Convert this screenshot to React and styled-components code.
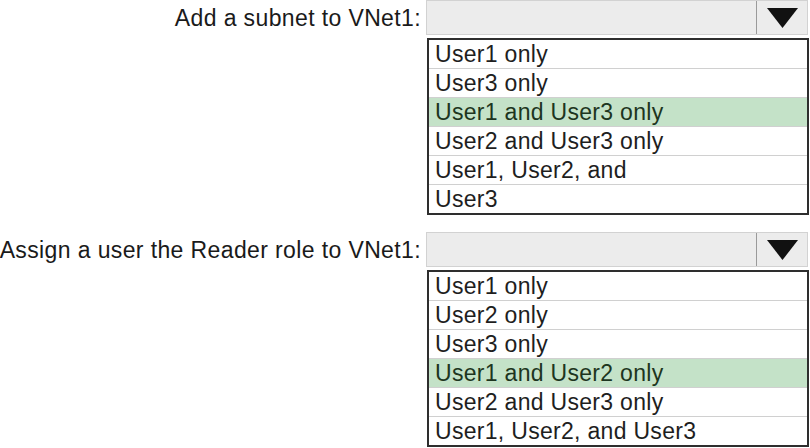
import React from "react";
import styled, { createGlobalStyle } from "styled-components";

const Global = createGlobalStyle`
  html, body { margin: 0; padding: 0; background: #ffffff; }
  body { font-family: "Liberation Sans", Arial, sans-serif; color: #222; }
`;

const Page = styled.div`
  width: 810px;
  height: 448px;
  overflow: hidden;
  display: flex;
  flex-direction: column;
  gap: 17px;
`;

const Block = styled.div`
  display: grid;
  grid-template-columns: 426px 383px;
  grid-template-rows: 35px auto;
  row-gap: 3px;
`;

const Label = styled.div`
  grid-column: 1;
  grid-row: 1;
  justify-self: end;
  align-self: center;
  padding-right: 5px;
  font-size: 23px;
  letter-spacing: 0.38px;
  line-height: 26px;
  color: #1a1a1a;
  white-space: nowrap;
  padding-top: 1px;
`;

const Header = styled.div`
  grid-column: 2;
  grid-row: 1;
  display: flex;
  background: #ececec;
  border: 1px solid #d2d2d2;
  box-sizing: border-box;
  width: 382px;
`;

const Field = styled.div`
  flex: 1;
`;

const ArrowButton = styled.div`
  width: 50px;
  border-left: 1px solid #9a9a9a;
  display: flex;
  align-items: center;
  justify-content: center;
`;

const List = styled.div`
  grid-column: 2;
  grid-row: 2;
  margin-left: 1px;
  border: 2px solid #2e2e2e;
  box-sizing: border-box;
  width: 382px;
  display: flex;
  flex-direction: column;
`;

const Option = styled.div`
  height: 28px;
  line-height: 28px;
  padding-left: 6px;
  font-size: 23px;
  letter-spacing: 0.3px;
  color: ${(p) => (p.$selected ? "#1d3520" : "#1e1e1e")};
  background: ${(p) => (p.$selected ? "#c4e2c8" : "#ffffff")};
  border-top: ${(p) => (p.$first ? "none" : "1px solid #d0d0d0")};
  white-space: nowrap;
`;

const Arrow = () => (
  <svg width="31" height="20" viewBox="0 0 31 20">
    <polygon points="0,0 31,0 15.5,20" fill="#111" />
  </svg>
);

const Dropdown = ({ label, options, selected }) => (
  <Block>
    <Label>{label}</Label>
    <Header>
      <Field />
      <ArrowButton>
        <Arrow />
      </ArrowButton>
    </Header>
    <List>
      {options.map((o, i) => (
        <Option key={i} $first={i === 0} $selected={i === selected}>
          {o}
        </Option>
      ))}
    </List>
  </Block>
);

export default function App() {
  return (
    <>
      <Global />
      <Page>
        <Dropdown
          label="Add a subnet to VNet1:"
          selected={2}
          options={[
            "User1 only",
            "User3 only",
            "User1 and User3 only",
            "User2 and User3 only",
            "User1, User2, and",
            "User3",
          ]}
        />
        <Dropdown
          label="Assign a user the Reader role to VNet1:"
          selected={3}
          options={[
            "User1 only",
            "User2 only",
            "User3 only",
            "User1 and User2 only",
            "User2 and User3 only",
            "User1, User2, and User3",
          ]}
        />
      </Page>
    </>
  );
}
